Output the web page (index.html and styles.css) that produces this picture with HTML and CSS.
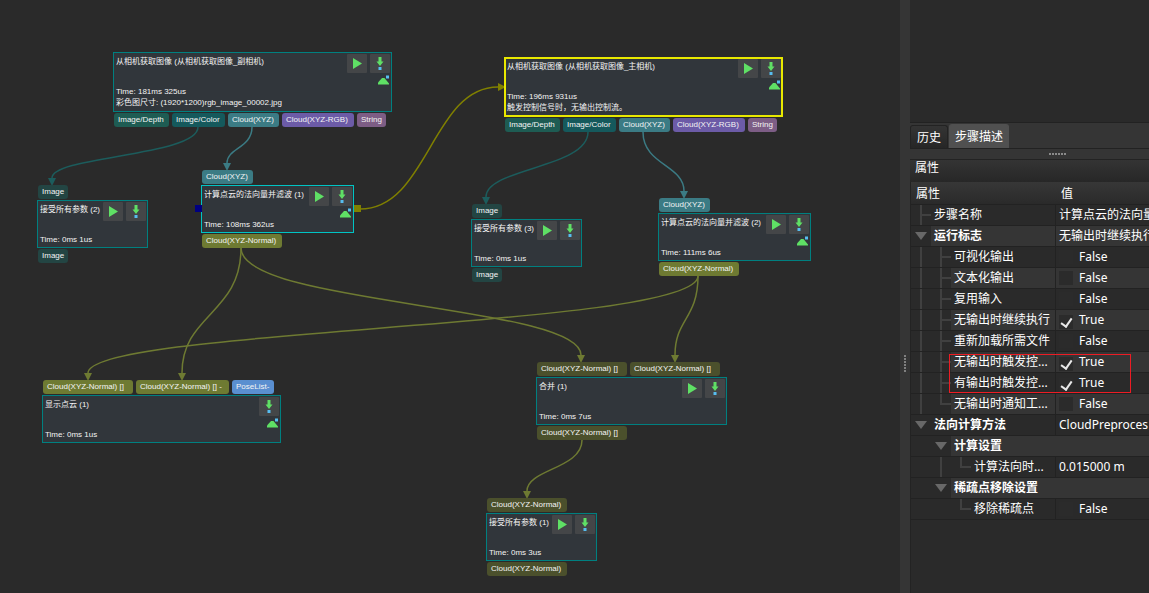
FILE: index.html
```html
<!DOCTYPE html>
<html lang="zh-CN">
<head>
<meta charset="utf-8">
<title>步骤编辑器</title>
<link rel="stylesheet" href="styles.css">
</head>
<body>
<svg class="defs" aria-hidden="true">
  <symbol id="play" viewBox="0 0 20 19"><path d="M6 4v11l9-5.500z" fill="#5fe065"/></symbol>
  <symbol id="down" viewBox="0 0 20 19"><path d="M8.500 3h3v4.500h2L10 12 6.500 7.500h2z" fill="#5fe065"/><rect x="8.500" y="13" width="3" height="3" fill="#57bdf0"/></symbol>
  <symbol id="picture" viewBox="0 0 11 10"><path d="M0 9.500V7.500L4 3h2.500L11 8.500v1z" fill="#5fe065"/><rect x="8" y="0.500" width="3" height="3" fill="#57bdf0"/></symbol>
  <marker id="tip" viewBox="0 0 8 8" refX="0" refY="4" markerWidth="8" markerHeight="8" markerUnits="userSpaceOnUse" orient="auto"><path d="M0 0l8 4-8 4z" fill="context-stroke"/></marker>
</svg>
<div class="app">
  <main class="canvas">
    <svg class="edges" aria-hidden="true">
      <g fill="none">
        <path class="image" d="M198 127C198 156 52 156 52 178" marker-end="url(#tip)"/>
        <path class="cloud" d="M252 127C252 148 227 148 227 163" marker-end="url(#tip)"/>
        <path class="control" d="M360 209C428 209 432 87 498 87" marker-end="url(#tip)"/>
        <path class="image" d="M588 132C588 168 486 168 486 197" marker-end="url(#tip)"/>
        <path class="cloud" d="M643 132C643 165 684 165 684 191" marker-end="url(#tip)"/>
        <path class="normal" d="M241 248C241 314 182 314 182 373" marker-end="url(#tip)"/>
        <path class="normal" d="M241 248C241 305 581 305 581 355" marker-end="url(#tip)"/>
        <path class="normal" d="M698 276C698 319 675 319 675 355" marker-end="url(#tip)"/>
        <path class="normal" d="M698 276C698 328 88 328 88 373" marker-end="url(#tip)"/>
        <path class="normal" d="M582 440C582 469 527 469 527 491" marker-end="url(#tip)"/>
      </g>
    </svg>

    <section class="step" style="left:113px;top:52px">
      <div class="box wide tall">
        <div class="text"><h2>从相机获取图像 (从相机获取图像_副相机)</h2><p>Time: 181ms 325us</p><p>彩色图尺寸: (1920*1200)rgb_image_00002.jpg</p></div>
        <div class="tools"><button aria-label="运行"><svg><use href="#play"/></svg></button><button aria-label="单步"><svg><use href="#down"/></svg></button><svg class="pic"><use href="#picture"/></svg></div>
      </div>
      <div class="ports out"><span class="port depth">Image/Depth</span><span class="port color">Image/Color</span><span class="port xyz">Cloud(XYZ)</span><span class="port rgb">Cloud(XYZ-RGB)</span><span class="port string">String</span></div>
    </section>

    <section class="step" style="left:504px;top:57px">
      <div class="box wide tall selected">
        <div class="text"><h2>从相机获取图像 (从相机获取图像_主相机)</h2><p>Time: 196ms 931us</p><p>触发控制信号时，无输出控制流。</p></div>
        <div class="tools"><button aria-label="运行"><svg><use href="#play"/></svg></button><button aria-label="单步"><svg><use href="#down"/></svg></button><svg class="pic"><use href="#picture"/></svg></div>
      </div>
      <div class="ports out"><span class="port depth">Image/Depth</span><span class="port color">Image/Color</span><span class="port xyz">Cloud(XYZ)</span><span class="port rgb">Cloud(XYZ-RGB)</span><span class="port string">String</span></div>
    </section>

    <section class="step" style="left:37px;top:185px">
      <div class="ports"><span class="port image">Image</span></div>
      <div class="box small">
        <div class="text"><h2>接受所有参数 (2)</h2><p>Time: 0ms 1us</p></div>
        <div class="tools"><button aria-label="运行"><svg><use href="#play"/></svg></button><button aria-label="单步"><svg><use href="#down"/></svg></button></div>
      </div>
      <div class="ports out"><span class="port image">Image</span></div>
    </section>

    <section class="step" style="left:201px;top:170px">
      <div class="ports"><span class="port xyz">Cloud(XYZ)</span></div>
      <div class="box medium current">
        <div class="text"><h2>计算点云的法向量并滤波 (1)</h2><p>Time: 108ms 362us</p></div>
        <div class="tools"><button aria-label="运行"><svg><use href="#play"/></svg></button><button aria-label="单步"><svg><use href="#down"/></svg></button><svg class="pic"><use href="#picture"/></svg></div>
        <i class="pin before"></i><i class="pin after"></i>
      </div>
      <div class="ports out"><span class="port normal">Cloud(XYZ-Normal)</span></div>
    </section>

    <section class="step" style="left:471px;top:204px">
      <div class="ports"><span class="port image">Image</span></div>
      <div class="box small">
        <div class="text"><h2>接受所有参数 (3)</h2><p>Time: 0ms 1us</p></div>
        <div class="tools"><button aria-label="运行"><svg><use href="#play"/></svg></button><button aria-label="单步"><svg><use href="#down"/></svg></button></div>
      </div>
      <div class="ports out"><span class="port image">Image</span></div>
    </section>

    <section class="step" style="left:658px;top:198px">
      <div class="ports"><span class="port xyz">Cloud(XYZ)</span></div>
      <div class="box medium">
        <div class="text"><h2>计算点云的法向量并滤波 (2)</h2><p>Time: 111ms 6us</p></div>
        <div class="tools"><button aria-label="运行"><svg><use href="#play"/></svg></button><button aria-label="单步"><svg><use href="#down"/></svg></button><svg class="pic"><use href="#picture"/></svg></div>
      </div>
      <div class="ports out"><span class="port normal">Cloud(XYZ-Normal)</span></div>
    </section>

    <section class="step" style="left:42px;top:380px">
      <div class="ports"><span class="port normal list">Cloud(XYZ-Normal) []</span><span class="port normal option">Cloud(XYZ-Normal) [] -</span><span class="port pose">PoseList-</span></div>
      <div class="box display">
        <div class="text"><h2>显示点云 (1)</h2><p>Time: 0ms 1us</p></div>
        <div class="tools"><button aria-label="单步"><svg><use href="#down"/></svg></button><svg class="pic"><use href="#picture"/></svg></div>
      </div>
    </section>

    <section class="step" style="left:536px;top:362px">
      <div class="ports"><span class="port normal list dim">Cloud(XYZ-Normal) []</span><span class="port normal list dim">Cloud(XYZ-Normal) []</span></div>
      <div class="box merge">
        <div class="text"><h2>合并 (1)</h2><p>Time: 0ms 7us</p></div>
        <div class="tools"><button aria-label="运行"><svg><use href="#play"/></svg></button><button aria-label="单步"><svg><use href="#down"/></svg></button></div>
      </div>
      <div class="ports out"><span class="port normal list dim">Cloud(XYZ-Normal) []</span></div>
    </section>

    <section class="step" style="left:486px;top:498px">
      <div class="ports"><span class="port normal dim">Cloud(XYZ-Normal)</span></div>
      <div class="box small">
        <div class="text"><h2>接受所有参数 (1)</h2><p>Time: 0ms 3us</p></div>
        <div class="tools"><button aria-label="运行"><svg><use href="#play"/></svg></button><button aria-label="单步"><svg><use href="#down"/></svg></button></div>
      </div>
      <div class="ports out"><span class="port normal dim">Cloud(XYZ-Normal)</span></div>
    </section>
  </main>

  <div class="splitter"><i class="grip vertical"></i></div>

  <aside class="panel">
    <div class="preview"></div>
    <nav class="tabs"><button class="tab">历史</button><button class="tab active">步骤描述</button></nav>
    <div class="handle"><i class="grip"></i></div>
    <h1 class="title">属性</h1>
    <div class="tree">
      <table>
        <thead><tr><th>属性</th><th>值</th></tr></thead>
        <tbody>
          <tr><td><div class="name"><i class="tee"></i>步骤名称</div></td><td>计算点云的法向量</td></tr>
          <tr class="alt"><td><div class="name group"><i class="open"></i>运行标志</div></td><td>无输出时继续执行</td></tr>
          <tr><td><div class="name"><i class="line"></i><i class="tee"></i><label for="c1">可视化输出</label></div></td><td><input type="checkbox" id="c1">False</td></tr>
          <tr class="alt"><td><div class="name"><i class="line"></i><i class="tee"></i><label for="c2">文本化输出</label></div></td><td><input type="checkbox" id="c2">False</td></tr>
          <tr><td><div class="name"><i class="line"></i><i class="tee"></i><label for="c3">复用输入</label></div></td><td><input type="checkbox" id="c3">False</td></tr>
          <tr class="alt"><td><div class="name"><i class="line"></i><i class="tee"></i><label for="c4">无输出时继续执行</label></div></td><td><input type="checkbox" id="c4" checked>True</td></tr>
          <tr><td><div class="name"><i class="line"></i><i class="tee"></i><label for="c5">重新加载所需文件</label></div></td><td><input type="checkbox" id="c5">False</td></tr>
          <tr class="alt marked"><td><div class="name"><i class="line"></i><i class="tee"></i><label for="c6">无输出时触发控...</label></div><span class="mark"></span></td><td><input type="checkbox" id="c6" checked>True</td></tr>
          <tr><td><div class="name"><i class="line"></i><i class="tee"></i><label for="c7">有输出时触发控...</label></div></td><td><input type="checkbox" id="c7" checked>True</td></tr>
          <tr class="alt"><td><div class="name"><i class="line"></i><i class="tee last"></i><label for="c8">无输出时通知工...</label></div></td><td><input type="checkbox" id="c8">False</td></tr>
          <tr><td><div class="name group"><i class="open"></i>法向计算方法</div></td><td>CloudPreproces</td></tr>
          <tr class="alt"><td colspan="2"><div class="name group"><i></i><i class="open"></i>计算设置</div></td></tr>
          <tr><td><div class="name"><i></i><i class="line"></i><i class="tee last"></i>计算法向时...</div></td><td>0.015000 m</td></tr>
          <tr class="alt"><td colspan="2"><div class="name group"><i></i><i class="open"></i>稀疏点移除设置</div></td></tr>
          <tr><td><div class="name"><i></i><i></i><i class="tee last"></i><label for="c9">移除稀疏点</label></div></td><td><input type="checkbox" id="c9">False</td></tr>
        </tbody>
      </table>
    </div>
  </aside>
</div>
</body>
</html>
```
FILE: styles.css
```css
* { box-sizing: border-box; }
body { margin: 0; background: #2a2a2a; }
h1, h2, p { margin: 0; font-weight: 400; }
button { border: 0; padding: 0; font: inherit; color: inherit; }
.defs { position: absolute; width: 0; height: 0; }

.app { display: flex; height: 100vh; overflow: hidden; }

/* Graph canvas */
.canvas {
  position: relative;
  flex: 1;
  min-width: 0;
  overflow: hidden;
  background: #2a2a2a;
  color: #f4f4f4;
  font: 8px/11px "Liberation Sans", "Noto Sans CJK SC", sans-serif;
}
.edges { position: absolute; inset: 0; width: 100%; height: 100%; stroke-width: 1.5; }
.edges .image { stroke: #1c5c5c; }
.edges .cloud { stroke: #3b7b84; }
.edges .normal { stroke: #6e7a32; }
.edges .control { stroke: #808000; }

.step { position: absolute; }
.box {
  position: relative;
  display: flex;
  justify-content: space-between;
  min-height: 48px;
  padding: 1px 1px 0;
  border: 1px solid #008080;
  background: #31363b;
  white-space: nowrap;
}
.tall { min-height: 60px; }
.wide { width: 279px; }
.medium { width: 153px; }
.small { width: 111px; }
.display { width: 239px; }
.merge { width: 191px; }
.selected { border: 2px solid #e8e800; padding: 0; }
.current { border-color: #00c4c4; }
.text { flex: 1; min-width: 0; padding: 2px 0 0 1px; }
.text h2 { margin-bottom: 19px; font-size: 8px; line-height: 11px; }
.tools {
  display: flex;
  flex-wrap: wrap;
  justify-content: flex-end;
  align-content: flex-start;
  gap: 2px 3px;
  width: 43px;
}
.display .tools { width: 20px; }
.tools button { width: 20px; height: 19px; border-radius: 1px; background: #444648; }
.tools button svg { display: block; width: 20px; height: 19px; }
.pic { width: 11px; height: 10px; margin-right: 1px; }
.pin { position: absolute; top: 19px; width: 7px; height: 7px; }
.before { left: -7px; background: #000080; }
.after { right: -8px; background: #808000; }

.ports { display: flex; gap: 3px; padding: 0 0 1px 1px; }
.out { padding: 1px 0 0 1px; }
.port {
  height: 14px;
  padding-left: 4px;
  border-radius: 3px;
  line-height: 13px;
  white-space: nowrap;
}
.depth { width: 55px; background: #1e5c53; }
.color { width: 53px; background: #15595c; }
.xyz { width: 51px; background: #3b7b84; }
.rgb { width: 72px; background: #6c5ba7; }
.string { width: 29px; background: #7d5d85; }
.port.image { width: 30px; background: #234543; }
.port.normal { width: 80px; background: #6e7a32; }
.port.list { width: 90px; }
.port.option { width: 93px; }
.port.dim { background: #4b502c; }
.pose { width: 42px; background: #5a8fd0; }

/* Splitter and panel */
.splitter {
  display: flex;
  flex: none;
  align-items: center;
  justify-content: center;
  width: 10px;
  padding-top: 134px;
  background: #353535;
}
.grip { width: 18px; height: 2px; background: repeating-linear-gradient(90deg, #8a8a8a 0 2px, transparent 2px 3px); }
.grip.vertical { width: 2px; height: 18px; background: repeating-linear-gradient(#808080 0 2px, transparent 2px 3px); }

.panel {
  display: flex;
  flex: none;
  flex-direction: column;
  width: 239px;
  overflow: hidden;
  background: #353535;
  color: #fff;
  font: 12px/20px "Noto Sans", "Noto Sans CJK SC", sans-serif;
}
.preview { height: 123px; background: #2a2a2a; border-bottom: 1px solid #222; }
.tabs { display: flex; align-items: flex-end; gap: 1px; height: 26px; border-bottom: 1px solid #222; }
.tab {
  height: 23px;
  padding: 1px 6px 0;
  border: 1px solid #232323;
  border-bottom: 0;
  border-radius: 3px 3px 0 0;
  background: linear-gradient(#343434, #262626);
}
.tab.active { height: 24px; padding: 1px 5px 0; background: #505050; border-color: #505050; }
.handle { display: flex; align-items: center; justify-content: center; height: 10px; padding-left: 56px; }
.title {
  height: 23px;
  padding-left: 5px;
  border-top: 1px solid #232323;
  background: linear-gradient(#343434, #272727);
  font-size: 12px;
  line-height: 16px;
}
.tree { flex: 1; overflow: hidden; background: #2a2a2a; border-left: 1px solid #232323; }
table { width: 100%; table-layout: fixed; border-collapse: separate; border-spacing: 0; }
th {
  height: 23px;
  padding: 0 5px;
  border-bottom: 1px solid #222;
  background: linear-gradient(#373737, #2a2a2a);
  font-weight: 400;
  line-height: 21px;
  text-align: left;
}
th:first-child { width: 145px; }
td {
  height: 21px;
  padding: 0 0 0 3px;
  border-bottom: 1px solid #222;
  white-space: nowrap;
}
td:first-child { padding: 0; }
td:first-child:not([colspan]) { border-right: 1px solid #222; }
.alt td { background: #353535; }
.marked { position: relative; }
.name { display: flex; height: 20px; }
.group { font-weight: 700; }
.name i { position: relative; flex: none; width: 20px; background: #2a2a2a; }
.name i:last-of-type { margin-right: 3px; }
.line::before, .tee::before {
  content: "";
  position: absolute;
  top: 0;
  left: 9px;
  width: 2px;
  height: 20px;
  background: #404040;
}
.tee::after {
  content: "";
  position: absolute;
  top: 9px;
  left: 9px;
  width: 11px;
  height: 2px;
  background: #404040;
}
.tee.last::before { height: 10px; }
.open::before {
  content: "";
  position: absolute;
  top: 6px;
  left: 4px;
  border: solid transparent;
  border-width: 8px 6px 0;
  border-top-color: #686868;
}
input {
  appearance: none;
  display: inline-flex;
  justify-content: center;
  width: 14px;
  height: 14px;
  margin: 0 6px 0 0;
  background: #2b2b2b;
  vertical-align: -3px;
}
input:checked::before {
  content: "";
  width: 5px;
  height: 9px;
  margin-top: 1px;
  border: solid #e8e8e8;
  border-width: 0 2px 2px 0;
  transform: rotate(35deg);
}
.mark {
  position: absolute;
  z-index: 1;
  top: 2px;
  left: 38px;
  width: 182px;
  height: 39px;
  border: 1px solid #ed1c24;
  pointer-events: none;
}
```
